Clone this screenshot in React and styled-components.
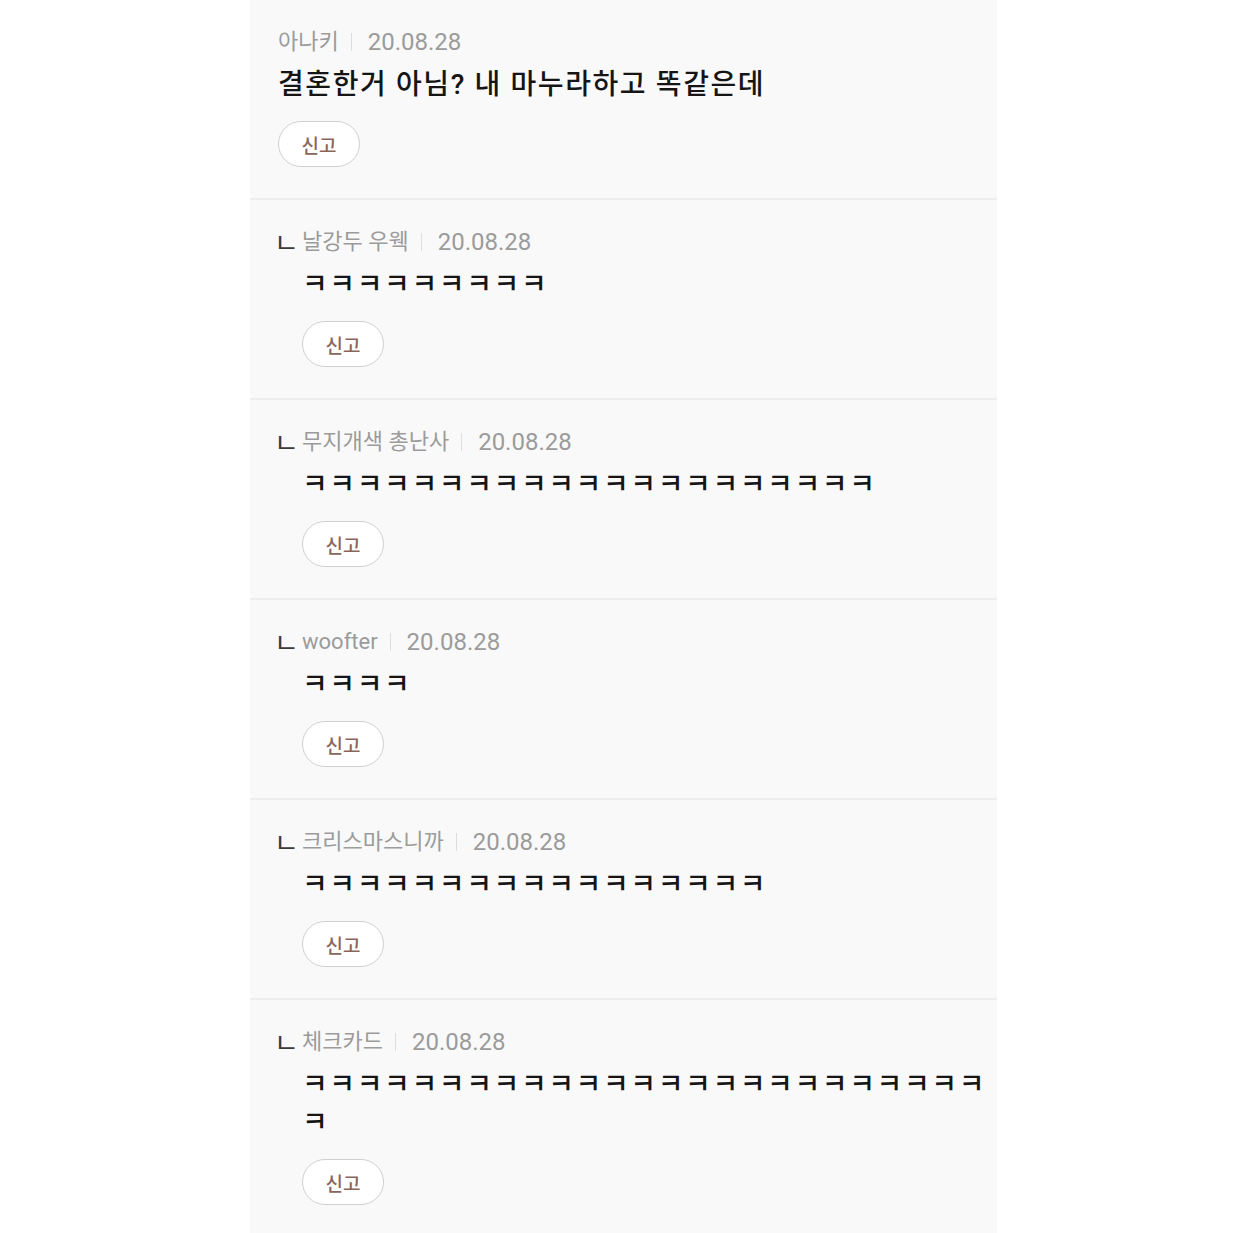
import React from "react";
import styled, { createGlobalStyle } from "styled-components";

const GlobalStyle = createGlobalStyle`
  html, body {
    margin: 0;
    padding: 0;
    background: #fff;
  }
  body {
    font-family: Roboto, "Noto Sans CJK KR", sans-serif;
  }
`;

const Panel = styled.div`
  width: 747px;
  margin-left: 250px;
  min-height: 1233px;
  background: #f9f9f9;
`;

const Item = styled.div`
  display: grid;
  grid-template-columns: ${(props) => (props.reply ? "28px 1fr" : "1fr")};
  padding: 27px 2px 31px ${(props) => (props.reply ? "24px" : "28px")};
  border-bottom: 2px solid #eeeeee;

  &:last-child {
    border-bottom: none;
  }
`;

const Prefix = styled.div`
  height: 30px;
  font-family: "Noto Sans CJK KR", sans-serif;
  font-size: 27px;
  line-height: 30px;
  color: #3a3a3a;
`;

const Body = styled.div`
  display: flex;
  flex-direction: column;
  align-items: flex-start;
  min-width: 0;
`;

const Meta = styled.div`
  display: flex;
  align-items: center;
  height: 30px;
  color: #9b9b9b;
`;

const Name = styled.span`
  font-size: 22px;
  line-height: 30px;
`;

const Sep = styled.span`
  width: 1px;
  height: 18px;
  margin: 0 16px 0 12px;
  background: #dedede;
`;

const Date = styled.span`
  font-size: 24px;
  line-height: 30px;
`;

const Text = styled.div`
  margin-top: 9px;
  width: 100%;
  font-size: 28px;
  font-weight: 500;
  letter-spacing: 1.6px;
  line-height: 38px;
  color: #151515;
  word-break: break-all;
`;

const ReportButton = styled.button`
  margin-top: 17px;
  width: 82px;
  height: 46px;
  border: 1.5px solid #cfcfcf;
  border-radius: 23px;
  background: #fff;
  font-family: "Noto Sans CJK KR", sans-serif;
  font-size: 19px;
  font-weight: 500;
  color: #8a655c;
  padding: 0;
  cursor: pointer;
`;

const comments = [
  { name: "아나키", text: "결혼한거 아님? 내 마누라하고 똑같은데" },
  { name: "날강두 우웩", text: "ㅋ".repeat(9), reply: true },
  { name: "무지개색 총난사", text: "ㅋ".repeat(21), reply: true },
  { name: "woofter", text: "ㅋ".repeat(4), reply: true },
  { name: "크리스마스니까", text: "ㅋ".repeat(17), reply: true },
  { name: "체크카드", text: "ㅋ".repeat(26), reply: true },
];

const App = () => {
  return (
    <>
      <GlobalStyle />
      <Panel>
        {comments.map((item, i) => (
          <Item key={i} reply={item.reply}>
            {item.reply && <Prefix>ㄴ</Prefix>}
            <Body>
              <Meta>
                <Name>{item.name}</Name>
                <Sep />
                <Date>20.08.28</Date>
              </Meta>
              <Text>{item.text}</Text>
              <ReportButton>신고</ReportButton>
            </Body>
          </Item>
        ))}
      </Panel>
    </>
  );
};

export default App;
